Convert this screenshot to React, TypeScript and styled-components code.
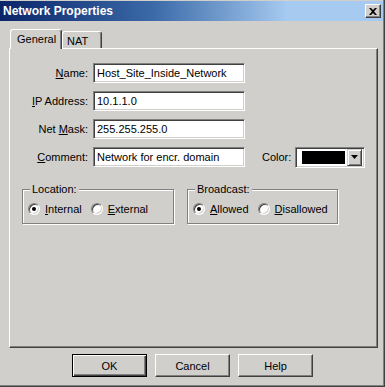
import styled, { createGlobalStyle } from "styled-components";

const face = "#d0cfcc";

const GlobalStyle = createGlobalStyle`
  html, body {
    margin: 0;
    padding: 0;
    background: ${face};
  }
  body {
    font-family: "Liberation Sans", Arial, sans-serif;
    font-size: 11px;
    color: #000;
  }
  * {
    box-sizing: border-box;
  }
`;

const Window = styled.div`
  width: 385px;
  height: 387px;
  background: ${face};
  border-right: 1px solid #404040;
  border-bottom: 1px solid #404040;
  box-shadow: inset -1px -1px 0 #808080;
  padding-top: 1px;
  display: flex;
  flex-direction: column;
`;

const TitleBar = styled.div`
  height: 20px;
  margin-right: 1px;
  padding: 0 2px 0 3px;
  background: linear-gradient(to right, #0a246a 0%, #3b6aa8 40%, #a6caf0 75%, #a6caf0 100%);
  display: flex;
  align-items: center;
  justify-content: space-between;
`;

const Title = styled.span`
  color: #fff;
  font-weight: bold;
  font-size: 12px;
`;

const CloseButton = styled.button`
  width: 16px;
  height: 14px;
  padding: 0;
  background: ${face};
  border: 1px solid;
  border-color: #fff #404040 #404040 #fff;
  box-shadow: inset -1px -1px 0 #808080;
  display: flex;
  align-items: center;
  justify-content: center;
`;

const TabStrip = styled.div`
  position: relative;
  z-index: 1;
  height: 19px;
  margin: 8px 0 0 10px;
  display: flex;
  align-items: flex-end;
`;

const Tab = styled.div<{ $active?: boolean; $width: number }>`
  width: ${(p) => p.$width}px;
  height: ${(p) => (p.$active ? 20 : 17)}px;
  margin-bottom: ${(p) => (p.$active ? -1 : 0)}px;
  padding: ${(p) => (p.$active ? "3px 0 0 6px" : "3px 0 0 4px")};
  background: ${face};
  border-top: 1px solid #fff;
  border-left: 1px solid #fff;
  border-right: 1px solid #404040;
  border-radius: 3px 3px 0 0;
  box-shadow: inset -1px 0 0 #808080;
  line-height: 13px;
`;

const Panel = styled.div`
  width: 369px;
  height: 300px;
  margin-left: 9px;
  padding-top: 14px;
  border-top: 1px solid #fff;
  border-left: 1px solid #fff;
  border-right: 1px solid #404040;
  border-bottom: 1px solid #404040;
  box-shadow: inset -1px -1px 0 #808080;
`;

const FormGrid = styled.div`
  display: grid;
  grid-template-columns: 78px 152px 1fr;
  grid-auto-rows: 20px;
  column-gap: 5px;
  row-gap: 8px;
  align-items: center;
`;

const FieldLabel = styled.label`
  grid-column: 1;
  text-align: right;
`;

const TextBox = styled.input`
  grid-column: 2;
  width: 100%;
  height: 20px;
  padding: 0 0 0 3px;
  margin: 0;
  background: #fff;
  border: 1px solid;
  border-color: #808080 #fff #fff #808080;
  box-shadow: inset 1px 1px 0 #404040, inset -1px -1px 0 ${face};
  font-family: "Liberation Sans", Arial, sans-serif;
  font-size: 11px;
  color: #000;
  outline: none;
`;

const ColorField = styled.div`
  grid-column: 3;
  display: flex;
  align-items: center;
  gap: 4px;
  padding-left: 12px;
`;

const Combo = styled.div`
  width: 70px;
  height: 21px;
  background: #fff;
  border: 1px solid;
  border-color: #808080 #fff #fff #808080;
  box-shadow: inset 1px 1px 0 #404040, inset -1px -1px 0 ${face};
  padding: 2px;
  display: flex;
  align-items: center;
`;

const Swatch = styled.div<{ $color: string }>`
  width: 43px;
  height: 13px;
  margin-left: 4px;
  background: ${(p) => p.$color};
`;

const DropButton = styled.div`
  width: 15px;
  height: 17px;
  margin-left: auto;
  background: ${face};
  border: 1px solid;
  border-color: ${face} #404040 #404040 ${face};
  box-shadow: inset 1px 1px 0 #fff, inset -1px -1px 0 #808080;
  display: flex;
  align-items: center;
  justify-content: center;
`;

const GroupRow = styled.div`
  display: flex;
  gap: 13px;
  margin: 22px 0 0 12px;
`;

const Group = styled.div<{ $width: number }>`
  position: relative;
  width: ${(p) => p.$width}px;
  height: 35px;
  padding: 13px 0 0 5px;
  border: 1px solid #808080;
  box-shadow: inset 1px 1px 0 #fff, 1px 1px 0 #fff;
  display: flex;
  gap: 9px;
`;

const GroupLegend = styled.span`
  position: absolute;
  top: -7px;
  left: 7px;
  padding: 0 2px;
  background: ${face};
  line-height: 13px;
`;

const RadioOption = styled.label`
  display: flex;
  align-items: center;
  gap: 5px;
  height: 12px;
  line-height: 12px;
`;

const RadioDot = styled.span<{ $checked?: boolean }>`
  width: 12px;
  height: 12px;
  border-radius: 50%;
  background: #fff;
  border: 1px solid;
  border-color: #808080 #fff #fff #808080;
  box-shadow: inset 1px 1px 0 #404040, inset -1px -1px 0 ${face};
  display: flex;
  align-items: center;
  justify-content: center;

  &::after {
    content: "";
    width: 4px;
    height: 4px;
    border-radius: 50%;
    background: ${(p) => (p.$checked ? "#000" : "transparent")};
  }
`;

const ButtonRow = styled.div`
  display: flex;
  gap: 8px;
  margin: 6px 0 0 72px;
`;

const PushButton = styled.button<{ $default?: boolean }>`
  width: 75px;
  height: 23px;
  padding: 0;
  background: ${face};
  font-family: "Liberation Sans", Arial, sans-serif;
  font-size: 11px;
  color: #000;
  border: 1px solid;
  border-color: ${(p) => (p.$default ? "#000" : "#fff #404040 #404040 #fff")};
  box-shadow: ${(p) =>
    p.$default
      ? "inset 1px 1px 0 #fff, inset -1px -1px 0 #404040, inset -2px -2px 0 #808080"
      : "inset -1px -1px 0 #808080"};
`;

function App() {
  return (
    <>
      <GlobalStyle />
      <Window>
        <TitleBar>
          <Title>Network Properties</Title>
          <CloseButton>
            <svg width="8" height="7" viewBox="0 0 8 7">
              <path d="M0 0h2l2 2 2-2h2L5 3.5 8 7H6L4 5 2 7H0l3-3.5z" fill="#000" />
            </svg>
          </CloseButton>
        </TitleBar>

        <TabStrip>
          <Tab $active $width={52}>General</Tab>
          <Tab $width={40}>NAT</Tab>
        </TabStrip>

        <Panel>
          <FormGrid>
            <FieldLabel>
              <u>N</u>ame:
            </FieldLabel>
            <TextBox readOnly value="Host_Site_Inside_Network" />
            <span />

            <FieldLabel>
              <u>I</u>P Address:
            </FieldLabel>
            <TextBox readOnly value="10.1.1.0" />
            <span />

            <FieldLabel>
              Net <u>M</u>ask:
            </FieldLabel>
            <TextBox readOnly value="255.255.255.0" />
            <span />

            <FieldLabel>
              <u>C</u>omment:
            </FieldLabel>
            <TextBox readOnly value="Network for encr. domain" />
            <ColorField>
              <span>Color:</span>
              <Combo>
                <Swatch $color="#000" />
                <DropButton>
                  <svg width="7" height="4" viewBox="0 0 7 4">
                    <path d="M0 0h7L3.5 4z" fill="#000" />
                  </svg>
                </DropButton>
              </Combo>
            </ColorField>
          </FormGrid>

          <GroupRow>
            <Group $width={152}>
              <GroupLegend>Location:</GroupLegend>
              <RadioOption>
                <RadioDot $checked />
                <span>
                  <u>I</u>nternal
                </span>
              </RadioOption>
              <RadioOption>
                <RadioDot />
                <span>
                  <u>E</u>xternal
                </span>
              </RadioOption>
            </Group>
            <Group $width={151}>
              <GroupLegend>Broadcast:</GroupLegend>
              <RadioOption>
                <RadioDot $checked />
                <span>
                  <u>A</u>llowed
                </span>
              </RadioOption>
              <RadioOption>
                <RadioDot />
                <span>
                  <u>D</u>isallowed
                </span>
              </RadioOption>
            </Group>
          </GroupRow>
        </Panel>

        <ButtonRow>
          <PushButton $default>OK</PushButton>
          <PushButton>Cancel</PushButton>
          <PushButton>Help</PushButton>
        </ButtonRow>
      </Window>
    </>
  );
}

export default App;
